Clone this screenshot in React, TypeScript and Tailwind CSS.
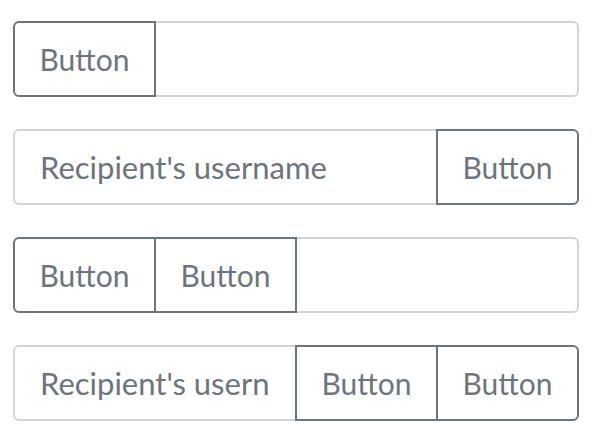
import React from "react";

const font = { fontFamily: "'Lato', 'Liberation Sans', sans-serif" };

function Btn({ first, last }: { first?: boolean; last?: boolean }) {
  return (
    <button
      type="button"
      className={
        "relative z-10 h-full w-[143px] shrink-0 border-2 border-[#6c757d] bg-white text-[30px] text-[#6c757d] flex items-center justify-center " +
        (first ? "rounded-l-[6px] " : "-ml-[2px] ") +
        (last ? "rounded-r-[6px]" : "")
      }
    >
      Button
    </button>
  );
}

function Input({ placeholder, first, last }: { placeholder?: string; first?: boolean; last?: boolean }) {
  return (
    <input
      type="text"
      placeholder={placeholder}
      className={
        "h-full min-w-0 flex-1 border-2 border-[#ced4da] bg-white pl-[25px] pr-[25px] text-[31px] text-[#495057] placeholder:text-[#6c757d] outline-none " +
        (first ? "rounded-l-[6px] " : "-ml-[2px] ") +
        (last ? "rounded-r-[6px]" : "")
      }
      style={font}
    />
  );
}

export default function App() {
  return (
    <div className="bg-white w-[596px] h-[430px] pt-[21px] pl-[13px]" style={font}>
      <div className="flex w-[566px] flex-col gap-[32px]">
        <div className="flex h-[76px]">
          <Btn first />
          <Input last />
        </div>
        <div className="flex h-[76px]">
          <Input first placeholder="Recipient's username" />
          <Btn last />
        </div>
        <div className="flex h-[76px]">
          <Btn first />
          <Btn />
          <Input last />
        </div>
        <div className="flex h-[76px]">
          <Input first placeholder="Recipient's username" />
          <Btn />
          <Btn last />
        </div>
      </div>
    </div>
  );
}
